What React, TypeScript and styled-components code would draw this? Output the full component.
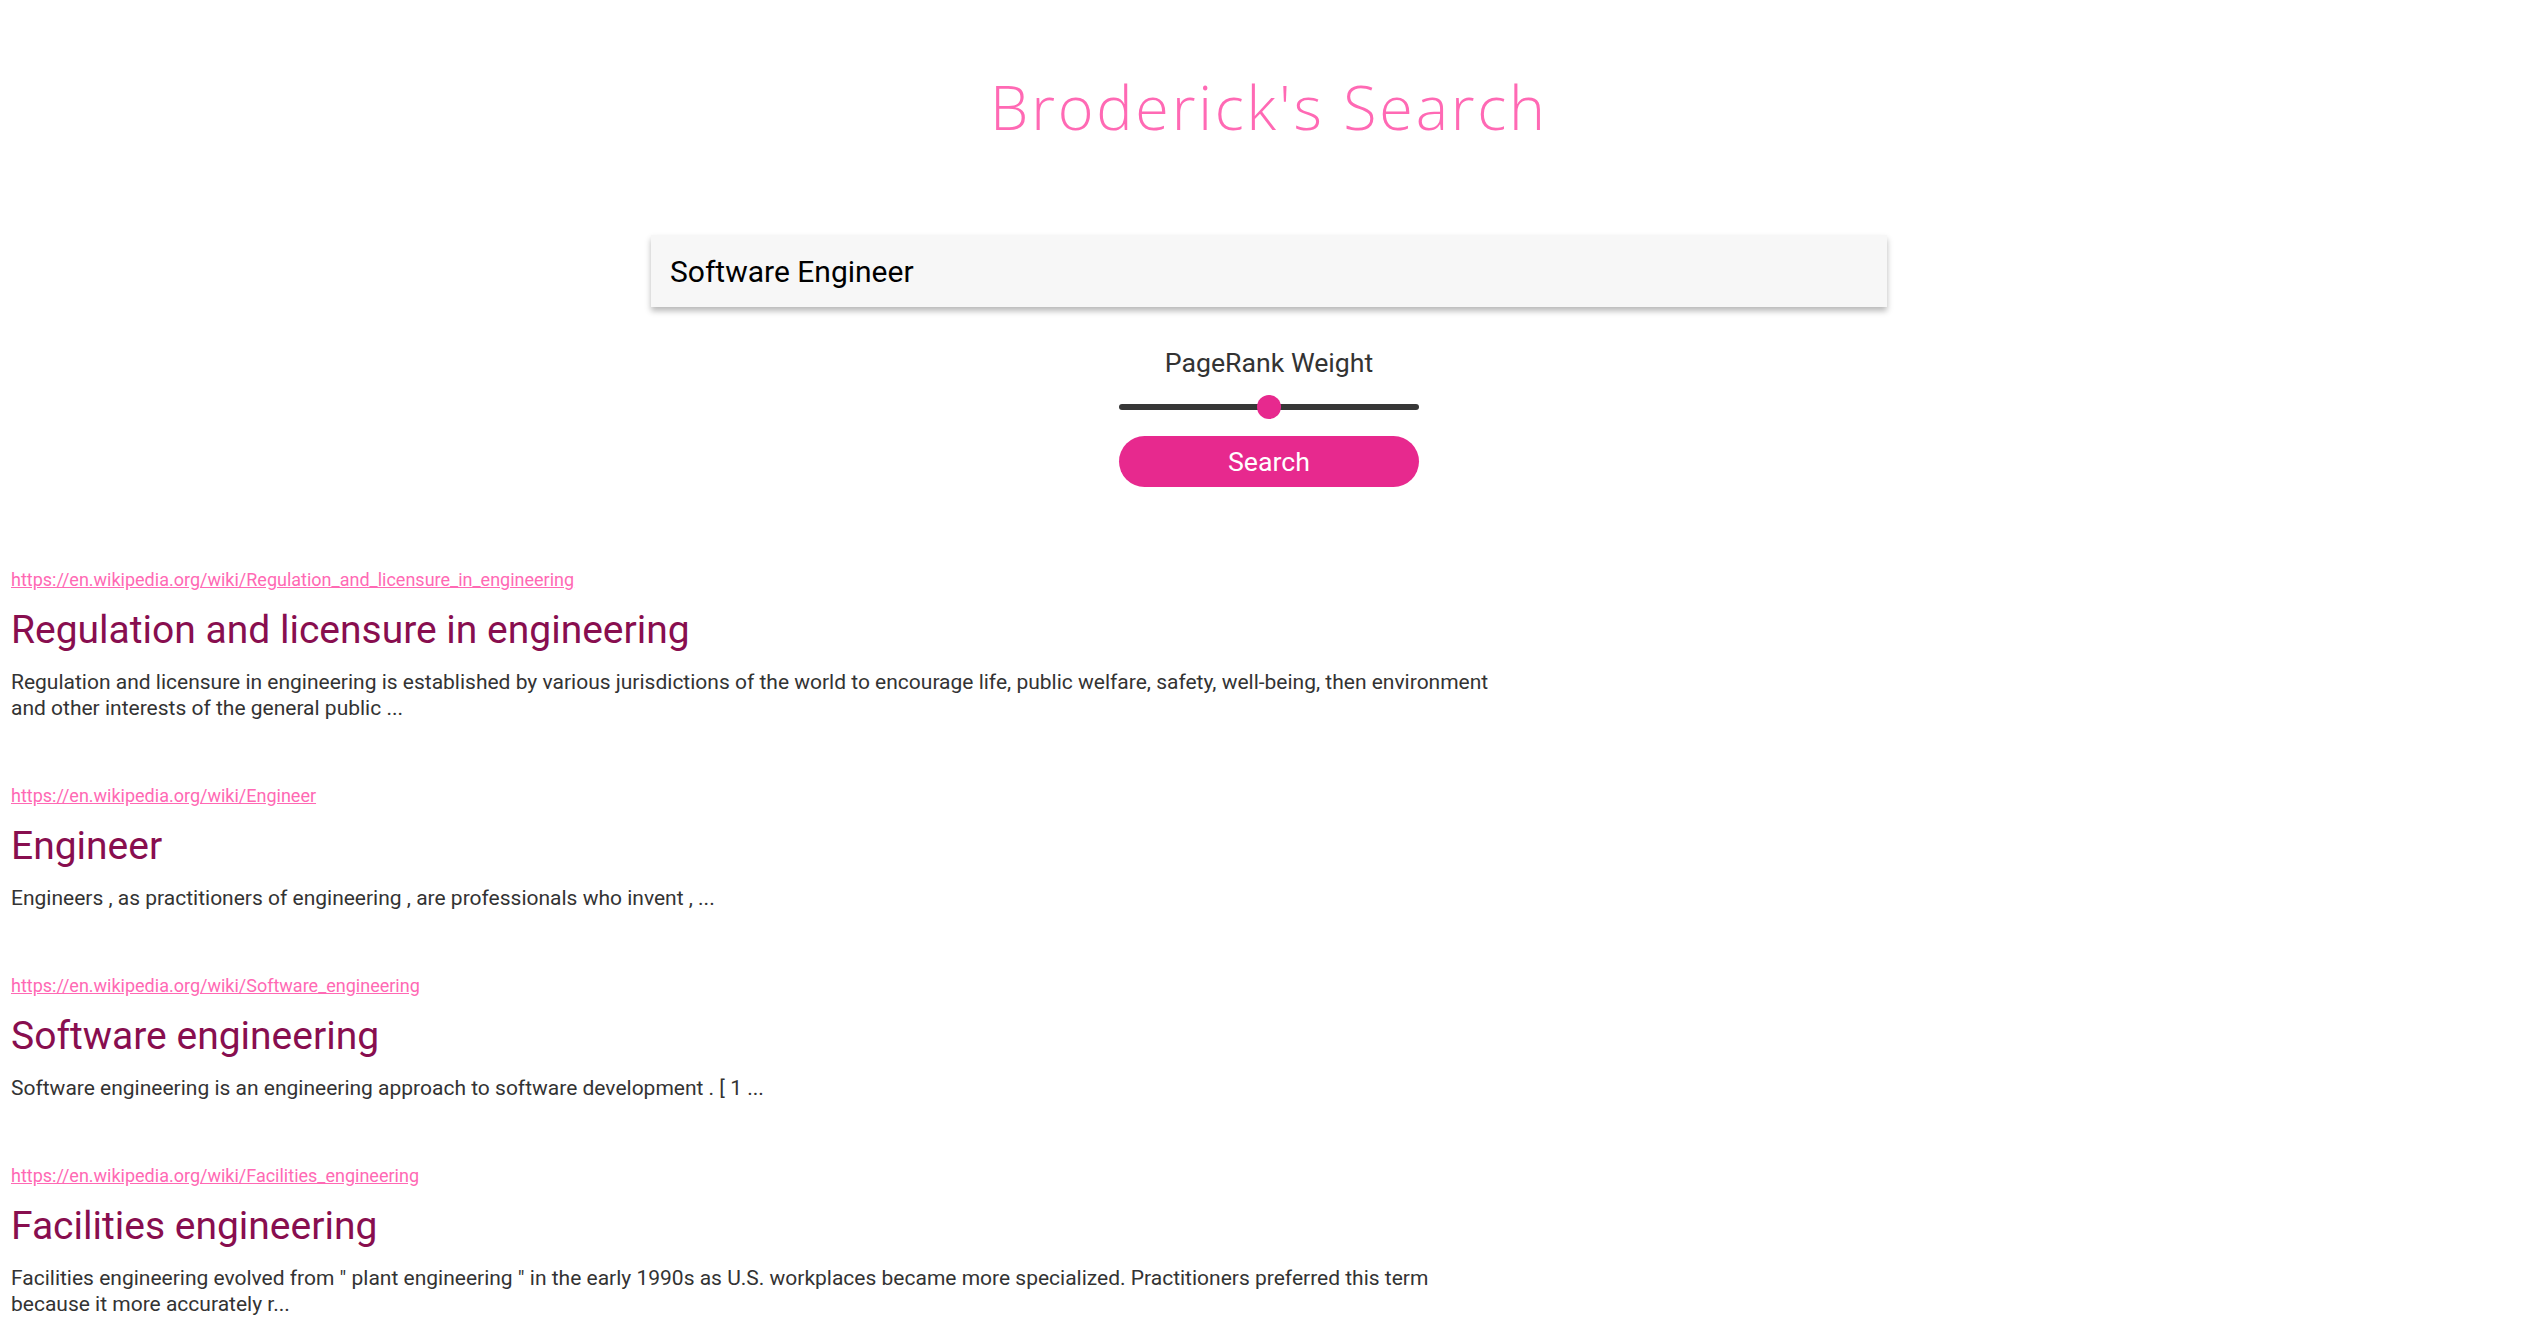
import React, { useState } from "react";
import styled, { createGlobalStyle } from "styled-components";

const GlobalStyle = createGlobalStyle`
  html, body {
    margin: 0;
    padding: 0;
    background: #ffffff;
  }
  body {
    font-family: Roboto, "Liberation Sans", Arial, sans-serif;
  }
  * { box-sizing: border-box; }
`;

const Page = styled.div`
  width: 100%;
  padding-left: 8px;
  display: flex;
  flex-direction: column;
  align-items: center;
`;

const Heading = styled.h1`
  margin: 66px 0 0;
  font-family: "Open Sans", "DejaVu Sans", sans-serif;
  font-weight: 300;
  font-size: 61px;
  line-height: 82px;
  letter-spacing: 2.8px;
  color: #ff69b4;
`;

const SearchBox = styled.input`
  margin-top: 87px;
  width: 1236px;
  height: 72px;
  border: none;
  outline: none;
  background: #f7f7f7;
  padding: 0 19px;
  font-family: Roboto, sans-serif;
  font-size: 30px;
  color: #000;
  box-shadow: 0 4px 6px rgba(0, 0, 0, 0.28);
`;

const Controls = styled.div`
  margin-top: 40px;
  width: 300px;
  display: flex;
  flex-direction: column;
  align-items: stretch;
`;

const Label = styled.label`
  font-family: Roboto, sans-serif;
  font-size: 26.7px;
  line-height: 32px;
  color: #333;
  text-align: center;
`;

const Range = styled.input`
  -webkit-appearance: none;
  appearance: none;
  margin: 16px 0 0;
  width: 300px;
  height: 24px;
  background: transparent;
  outline: none;

  &::-webkit-slider-runnable-track {
    height: 6px;
    border-radius: 3px;
    background: #373737;
  }
  &::-webkit-slider-thumb {
    -webkit-appearance: none;
    appearance: none;
    width: 24px;
    height: 24px;
    margin-top: -9px;
    border-radius: 50%;
    background: #e7298e;
    border: none;
  }
  &::-moz-range-track {
    height: 6px;
    border-radius: 3px;
    background: #373737;
  }
  &::-moz-range-thumb {
    width: 24px;
    height: 24px;
    border-radius: 50%;
    background: #e7298e;
    border: none;
  }
`;

const SearchButton = styled.button`
  margin-top: 17px;
  height: 51px;
  border: none;
  border-radius: 26px;
  background: #e7298e;
  color: #fff;
  font-family: Roboto, sans-serif;
  font-size: 26.7px;
  display: flex;
  align-items: center;
  justify-content: center;
  cursor: pointer;
`;

const Results = styled.div`
  align-self: stretch;
  margin-top: 82px;
  padding-left: 3px;
  display: flex;
  flex-direction: column;
  gap: 64px;
`;

const Result = styled.article`
  display: flex;
  flex-direction: column;
  max-width: 1495px;
`;

const Url = styled.a`
  font-family: Roboto, sans-serif;
  font-size: 18px;
  line-height: 22px;
  color: #ff69b4;
  text-decoration: underline;
  align-self: flex-start;
`;

const ResultTitle = styled.h2`
  margin: 16px 0 0;
  font-family: Roboto, sans-serif;
  font-weight: 400;
  font-size: 39px;
  line-height: 46px;
  color: #880e4f;
`;

const Snippet = styled.p`
  margin: 16px 0 0;
  font-family: Roboto, sans-serif;
  font-size: 21px;
  line-height: 26px;
  color: #333;
`;

const results = [
  {
    url: "https://en.wikipedia.org/wiki/Regulation_and_licensure_in_engineering",
    title: "Regulation and licensure in engineering",
    snippet:
      "Regulation and licensure in engineering is established by various jurisdictions of the world to encourage life, public welfare, safety, well-being, then environment and other interests of the general public ...",
  },
  {
    url: "https://en.wikipedia.org/wiki/Engineer",
    title: "Engineer",
    snippet: "Engineers , as practitioners of engineering , are professionals who invent , ...",
  },
  {
    url: "https://en.wikipedia.org/wiki/Software_engineering",
    title: "Software engineering",
    snippet: "Software engineering is an engineering approach to software development . [ 1 ...",
  },
  {
    url: "https://en.wikipedia.org/wiki/Facilities_engineering",
    title: "Facilities engineering",
    snippet:
      "Facilities engineering evolved from \" plant engineering \" in the early 1990s as U.S. workplaces became more specialized. Practitioners preferred this term because it more accurately r...",
  },
];

export default function App() {
  const [query, setQuery] = useState("Software Engineer");
  const [weight, setWeight] = useState(50);
  return (
    <>
      <GlobalStyle />
      <Page>
        <Heading>Broderick's Search</Heading>
        <SearchBox value={query} onChange={(e) => setQuery(e.target.value)} />
        <Controls>
          <Label htmlFor="pr">PageRank Weight</Label>
          <Range
            id="pr"
            type="range"
            min={0}
            max={100}
            value={weight}
            onChange={(e) => setWeight(Number(e.target.value))}
          />
          <SearchButton>Search</SearchButton>
        </Controls>
        <Results>
          {results.map((r) => (
            <Result key={r.url}>
              <Url href={r.url}>{r.url}</Url>
              <ResultTitle>{r.title}</ResultTitle>
              <Snippet>{r.snippet}</Snippet>
            </Result>
          ))}
        </Results>
      </Page>
    </>
  );
}
